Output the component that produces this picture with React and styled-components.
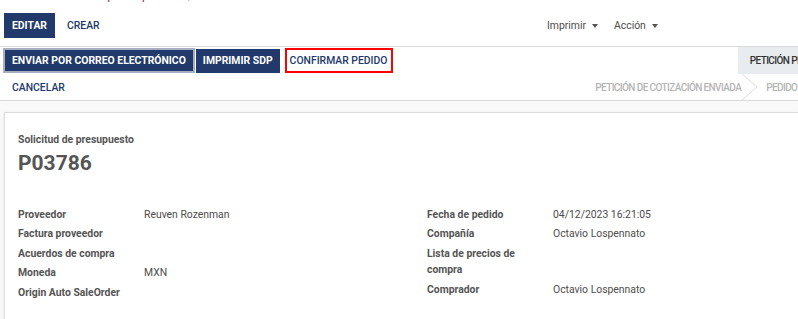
import React from "react";
import styled, { createGlobalStyle } from "styled-components";

const NAVY = "#213a6b";

const Global = createGlobalStyle`
  html, body { margin: 0; padding: 0; overflow: hidden; background: #fff; }
  body { font-family: Roboto, "Liberation Sans", Arial, sans-serif; font-size: 10.4px; color: #4c4c4c; }
  * { box-sizing: border-box; }
`;

const Page = styled.div`
  width: 798px;
  height: 319px;
  display: flex;
  flex-direction: column;
  overflow: hidden;
`;

const BreadcrumbClip = styled.div`
  height: 2px;
  overflow: hidden;
  padding-left: 16px;
`;

const Breadcrumb = styled.div`
  font-size: 14px;
  line-height: 14px;
  margin-top: -12px;
  color: #a24b6a;
  white-space: nowrap;
`;

const ControlRow = styled.div`
  display: grid;
  grid-template-columns: 1fr 1fr;
  align-items: center;
  padding: 11px 0 8px 4px;
  border-bottom: 1px solid #d9d9d9;
`;

const ButtonGroup = styled.div`
  display: flex;
  align-items: center;
  gap: ${(p) => p.$gap || 0}px;
`;

const Btn = styled.button`
  font-family: inherit;
  font-size: 10.4px;
  text-transform: uppercase;
  height: ${(p) => p.$h || 25}px;
  padding: 0 ${(p) => (p.$px != null ? p.$px : 8)}px;
  border: ${(p) => (p.$outline ? `2px solid ${p.$outline}` : "none")};
  border-radius: 0;
  background: ${(p) => (p.$primary ? NAVY : "#fff")};
  color: ${(p) => (p.$primary ? "#fff" : NAVY)};
  font-weight: ${(p) => (p.$primary ? 700 : 500)};
  margin-left: ${(p) => p.$ml || 0}px;
  white-space: nowrap;
  cursor: pointer;
  display: flex;
  align-items: center;
`;

const Sidebar = styled.div`
  display: flex;
  align-items: center;
  padding-left: 146px;
  gap: 16px;
`;

const Dropdown = styled.span`
  display: inline-flex;
  align-items: center;
  gap: 6px;
  color: #4c4c4c;
  font-size: 10.4px;
  &::after {
    content: "";
    border-top: 4px solid #555;
    border-left: 3.5px solid transparent;
    border-right: 3.5px solid transparent;
  }
`;

const StatusBar = styled.div`
  display: flex;
  flex-direction: column;
  border-bottom: 1px solid #d9d9d9;
`;

const StatusRow = styled.div`
  display: flex;
  align-items: center;
  height: ${(p) => p.$h}px;
  padding-left: ${(p) => p.$pl}px;
  overflow: hidden;
`;

const Statuses = styled.div`
  display: flex;
  align-items: stretch;
  height: 100%;
  margin-left: auto;
  margin-right: ${(p) => p.$mr}px;
  flex-shrink: 0;
`;

const Status = styled.div`
  display: flex;
  align-items: center;
  padding: 0 ${(p) => p.$px}px;
  font-size: 10px;
  letter-spacing: -0.6px;
  font-weight: 500;
  text-transform: uppercase;
  white-space: nowrap;
  color: ${(p) => (p.$active ? "#333" : "#b5b5b5")};
  background: ${(p) => (p.$active ? "#e9ecef" : "transparent")};
`;

const Chevron = styled.svg`
  width: 17px;
  height: 100%;
  flex-shrink: 0;
`;

const Body = styled.div`
  flex: 1;
  background: #f9f9f9;
  padding: 11px 0 0 4px;
  overflow: hidden;
`;

const Sheet = styled.div`
  background: #fff;
  border: 1px solid #dcdcdc;
  border-right: none;
  box-shadow: 0 2px 6px rgba(0, 0, 0, 0.06);
  min-height: 260px;
  padding: 18px 0 0 13px;
`;

const Kicker = styled.div`
  font-weight: 700;
  line-height: 17px;
  color: #555;
`;

const Title = styled.h1`
  margin: 2px 0 0;
  font-size: 21px;
  line-height: 26px;
  font-weight: 700;
  color: #555;
`;

const Groups = styled.div`
  display: grid;
  grid-template-columns: 409px 1fr;
  margin-top: 29px;
`;

const FieldTable = styled.div`
  display: grid;
  grid-template-columns: 126px 1fr;
  align-content: start;
`;

const Label = styled.div`
  font-weight: 700;
  color: #555;
  line-height: 16.5px;
  padding: 1.5px 16px 1.5px 0;
`;

const Value = styled.div`
  color: #4c4c4c;
  line-height: 16.5px;
  padding: 1.5px 0;
`;

const left = [
  ["Proveedor", "Reuven Rozenman"],
  ["Factura proveedor", ""],
  ["Acuerdos de compra", ""],
  ["Moneda", "MXN"],
  ["Origin Auto SaleOrder", ""],
];
const right = [
  ["Fecha de pedido", "04/12/2023 16:21:05"],
  ["Compañía", "Octavio Lospennato"],
  ["Lista de precios de compra", ""],
  ["Comprador", "Octavio Lospennato"],
];

const Fields = ({ rows }) => (
  <FieldTable>
    {rows.map(([l, v]) => (
      <React.Fragment key={l}>
        <Label>{l}</Label>
        <Value>{v}</Value>
      </React.Fragment>
    ))}
  </FieldTable>
);

export default function App() {
  return (
    <Page>
      <Global />
      <BreadcrumbClip>
        <Breadcrumb>Solicitudes de presupuesto / P03786</Breadcrumb>
      </BreadcrumbClip>
      <ControlRow>
        <ButtonGroup $gap={4}>
          <Btn $primary>Editar</Btn>
          <Btn>Crear</Btn>
        </ButtonGroup>
        <Sidebar>
          <Dropdown>Imprimir</Dropdown>
          <Dropdown>Acción</Dropdown>
        </Sidebar>
      </ControlRow>
      <StatusBar>
        <StatusRow $h={27} $pl={3}>
          <ButtonGroup $gap={1}>
            <Btn $primary $outline="#a5aec2" $h={25} $px={7}>Enviar por correo electrónico</Btn>
            <Btn $primary $h={24} $px={7}>Imprimir SDP</Btn>
            <Btn $outline="#ff0000" $ml={4} $h={25} $px={3}>Confirmar pedido</Btn>
          </ButtonGroup>
          <Statuses $mr={-67}>
            <Status $active $px={12}>Petición presupuesto</Status>
          </Statuses>
        </StatusRow>
        <StatusRow $h={26} $pl={4}>
          <Btn>Cancelar</Btn>
          <Statuses $mr={-60}>
            <Status $px={0}>Petición de cotización enviada</Status>
            <Chevron viewBox="0 0 17 26" preserveAspectRatio="none">
              <polyline points="1,0 16,13 1,26" fill="none" stroke="#dedede" strokeWidth="1" />
            </Chevron>
            <Status $px={8}>Pedido de compra</Status>
          </Statuses>
        </StatusRow>
      </StatusBar>
      <Body>
        <Sheet>
          <Kicker>Solicitud de presupuesto</Kicker>
          <Title>P03786</Title>
          <Groups>
            <Fields rows={left} />
            <Fields rows={right} />
          </Groups>
        </Sheet>
      </Body>
    </Page>
  );
}
